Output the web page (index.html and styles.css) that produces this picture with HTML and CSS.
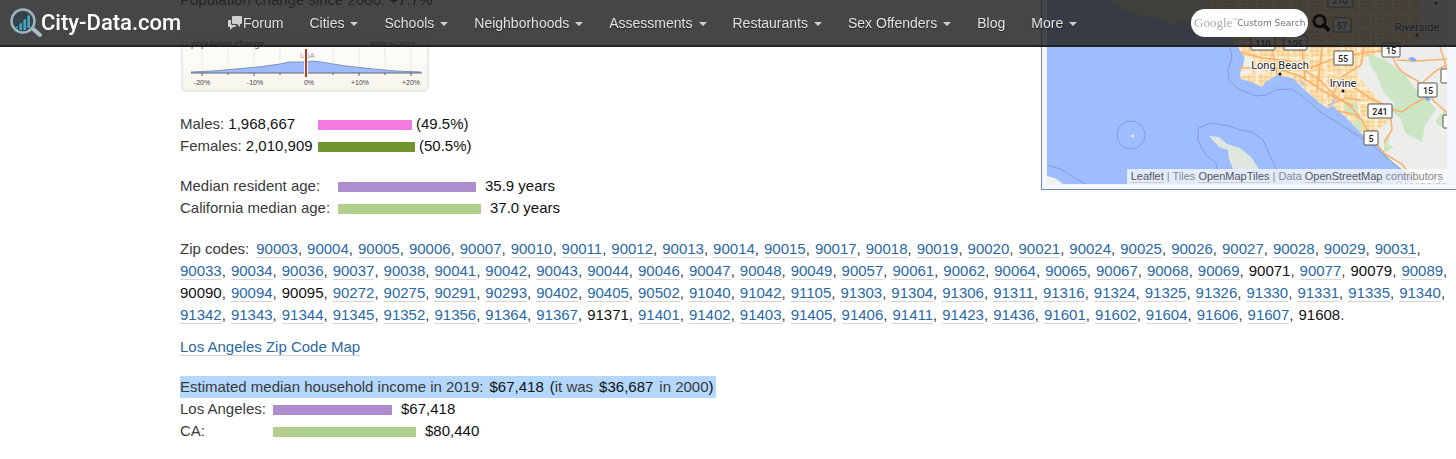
FILE: index.html
```html
<!DOCTYPE html>
<html lang="en">
<head>
<meta charset="utf-8">
<title>Los Angeles, California - City-Data.com</title>
<link rel="stylesheet" href="styles.css">
</head>
<body>
<header class="topbar">
  <a class="logo" href="#">
    <svg class="logo-mark" viewBox="0 0 32 30" aria-hidden="true">
      <path d="M22 20l8 7" stroke="#a9bcc2" stroke-width="4" stroke-linecap="round"/>
      <circle cx="13" cy="13" r="11.5" fill="#35444a" stroke="#9fb6be" stroke-width="2.5"/>
      <path d="M6 18h2v3h-2zM9 16h3v6h-3zM13 12h3v10h-3zM17 8h3v12h-3z" fill="#2b87a8"/>
      <path d="M11 15v7M15 11v11M19 7v13" stroke="#71bccc" stroke-width="1"/>
    </svg>
    <span>City-Data.com</span>
  </a>
  <nav class="menu">
    <a href="#"><svg class="chat" viewBox="0 0 16 14" aria-hidden="true"><path d="M6 0h8q1 0 1 1v6q0 1-1 1h-1v3l-3-3H6q-1 0-1-1V1q0-1 1-1zM4 4v4q0 1 1 1h4q0 2-1 2H6l-3 3v-3H2q-1 0-1-1V5q0-1 1-1z" fill="#d0d0d0"/></svg>Forum</a>
    <a class="drop" href="#">Cities</a>
    <a class="drop" href="#">Schools</a>
    <a class="drop" href="#">Neighborhoods</a>
    <a class="drop" href="#">Assessments</a>
    <a class="drop" href="#">Restaurants</a>
    <a class="drop" href="#">Sex Offenders</a>
    <a href="#">Blog</a>
    <a class="drop" href="#">More</a>
  </nav>
  <form class="search">
    <label class="pill"><span class="brand">Google<sup>™</sup></span><input type="text" placeholder="Custom Search" aria-label="Custom Search"></label>
    <button type="button" aria-label="Search"><svg viewBox="0 0 20 20" aria-hidden="true"><circle cx="8" cy="8" r="6" fill="none" stroke="#0c0c0c" stroke-width="3"/><path d="M12 12l6 6" stroke="#0c0c0c" stroke-width="4"/></svg></button>
  </form>
</header>

<main class="page">
  <div class="top">
    <div class="stats">
      <p class="line">Population change since 2000: <b>+7.7%</b></p>
      <svg class="chart" viewBox="0 0 248 60" role="img" aria-label="Population change, 2000 to 2010">
        <defs><linearGradient id="paper" x2="0" y2="1"><stop offset="0" stop-color="#fff"/><stop offset="1" stop-color="#f6f5ec"/></linearGradient></defs>
        <rect x="1" y="1" width="246" height="57" rx="4" fill="url(#paper)" stroke="#e9e9e5" stroke-width="2"/>
        <path d="M21 15v27M47 15v27M73 15v27M99 15v27M152 15v27M178 15v27M204 15v27M230 15v27" stroke="#ecebe2"/>
        <g class="caption"><text x="10" y="14">population change</text><text x="188" y="14">2005 to 2010</text></g>
        <text x="119" y="25" class="faint">USA</text>
        <path d="M10 39L32 38 55 36 77 34 99 31 109 29 125 29 131 28 140 29 152 31 165 33 192 36 215 38 240 39V40H10z" fill="#9dbafc"/>
        <path d="M10 39L32 38 55 36 77 34 99 31 109 29 125 29 131 28 140 29 152 31 165 33 192 36 215 38 240 39" fill="none" stroke="#7d93bd"/>
        <path d="M10 40H241M21 40v3M47 40v2M73 40v3M99 40v2M152 40v2M178 40v3M204 40v2M230 40v3" fill="none" stroke="#646464"/>
        <path d="M125 16v28" stroke="#fff" stroke-width="4"/><path d="M125 16v28" stroke="#b93b22" stroke-width="2"/>
        <g text-anchor="middle"><text x="21" y="52">-20%</text><text x="74" y="52">-10%</text><text x="128" y="52">0%</text><text x="179" y="52">+10%</text><text x="230" y="52">+20%</text></g>
      </svg>
      <div class="bars sex">
        <p><span>Males: <b>1,968,667</b></span><i class="bar pink" style="width:94px"></i><b>(49.5%)</b></p>
        <p><span>Females: <b>2,010,909</b></span><i class="bar leaf" style="width:97px"></i><b>(50.5%)</b></p>
      </div>
      <div class="bars age">
        <p><span>Median resident age:</span><i class="bar violet" style="width:138px"></i><b>35.9 years</b></p>
        <p><span>California median age:</span><i class="bar green" style="width:143px"></i><b>37.0 years</b></p>
      </div>
    </div>
    <aside class="map">
      <svg viewBox="1047 0 400 184" preserveAspectRatio="xMinYMin slice" role="img" aria-label="Map of the Los Angeles area">
        <defs>
          <pattern id="streets" width="17" height="15" patternUnits="userSpaceOnUse">
            <rect width="17" height="15" fill="#fbe6c0"/>
            <path d="M0 2h17M0 6h11M4 10h13M3 0v15M8 0v11M13 4v11" stroke="#f9c676" fill="none"/>
            <path d="M0 13h7M16 0v8" stroke="#fff7e6" stroke-width="1.5"/>
          </pattern>
        </defs>
        <rect x="1047" width="400" height="184" fill="#9ebdff"/>
        <path d="M1110 0L1130 13 1157 18 1170 24 1187 20 1215 22 1230 37 1238 47 1245 58 1243 66 1240 73 1241 79 1252 82 1262 87 1265 82 1277 75 1293 78 1303 88 1320 103 1328 108 1333 106 1347 118 1363 135 1378 145 1390 160 1407 173 1417 184H1447V0z" fill="#ededeb"/>
        <path d="M1110 0L1130 13 1157 18 1170 24 1187 20 1210 20V0z" fill="#cfe0b6"/>
        <path d="M1210 0V20L1230 37 1238 47 1245 58 1243 66 1240 73 1241 79 1252 82 1262 87 1265 82 1277 75 1293 78 1303 88 1320 103 1328 108 1333 106 1347 118 1363 135 1374 142 1377 130 1390 120 1386 108 1376 96 1364 84 1356 70 1366 58 1376 54 1400 48 1420 40V0z" fill="url(#streets)"/>
        <path d="M1368 54L1385 60 1403 72 1414 88 1425 97 1436 109 1425 125 1422 142 1405 133 1401 119 1390 110 1395 104 1384 93 1378 78 1370 64z" fill="#cce5c4"/>
        <path d="M1346 100l12 5 1 13-10-3-6-8zM1357 117l6 6-2 10-8-8zM1384 141l6-5-2 8 6 3-10 6zM1436 120l11-12v20l-10-3z" fill="#cfe5bd"/>
        <path d="M1245 55l9 5-3 14-9 2zM1255 65l8-2 2 8-9 3z" fill="#f1eee4"/>
        <g fill="none" stroke="#fcaf6c" stroke-width="1.5">
          <path d="M1240 52L1262 58 1290 61 1320 80 1333 94 1352 108 1362 120 1371 137 1385 154 1402 164 1417 184"/>
          <path d="M1272 47l5 28M1302 47l3 33M1322 47l-5 44M1310 68l30-12 40-5 15 0M1333 94l10-18 18-11 3-18M1350 85l20 13 20 10 2 22-8 12M1392 55c5 15 12 19 24 25l10 9 8 12 13 12M1397 60l20 1 30-2M1385 108l17 4 13-9 14-7M1440 47l7 22M1423 82l14-12 10-5"/>
          <path d="M1240 68h35l25 8 28 18 25 12M1328 105l18-7 15 2M1337 111l16 3 10 7"/>
        </g>
        <path d="M1274 81l6-3M1267 81l2 5M1270 80l5 1M1330 107l5-9M1301 81l3 4" stroke="#a7c4fb" stroke-width="2"/>
        <path d="M1408 58l5-1 4 3-5 2zM1424 97l4-1 3 4-4 1z" fill="#82acf4"/>
        <g fill="none" stroke="#8a9bcb">
          <path d="M1230 47l2 11-4 11 1 11 9 9 18 7 10-1 9-5 17-1 10 7 20 17 27 17 18 11 16 13 18 16 11 9"/>
          <circle cx="1131" cy="135" r="14"/>
          <path d="M1220 184l-4-21-10-8-8-14v-13l13-5 18 3 11 4 12 2 11 8 6 14 8 17 5 13M1047 165l14 4 12 8 13 7"/>
        </g>
        <path d="M1209 136l10 1 8 7 13 4 11 9 8 12-10 0h-16l-4-10-1-9-9-3z" fill="#dfe7df"/>
        <path d="M1047 176l8 2 8 6h-16z" fill="#f2f2ee"/><path d="M1131 135h3v2h-3z" fill="#e5ecf3"/>
        <g class="shield"><rect x="1328" y="-8" width="25" height="15" rx="1"/><rect x="1333" y="18" width="18" height="14" rx="1"/><rect x="1251" y="36" width="24" height="14" rx="1"/><rect x="1284" y="36" width="23" height="14" rx="1"/><rect x="1334" y="51" width="19" height="14" rx="1"/><rect x="1382" y="43" width="18" height="14" rx="1"/><rect x="1418" y="83" width="19" height="14" rx="1"/><rect x="1368" y="104" width="24" height="14" rx="1"/><rect x="1364" y="131" width="14" height="14" rx="1"/><rect x="1441" y="69" width="14" height="14" rx="1"/><rect x="1443" y="115" width="14" height="13" rx="1"/></g>
        <g class="num"><text x="1340" y="4">210</text><text x="1342" y="29">57</text><text x="1263" y="47">110</text><text x="1295" y="47">105</text><text x="1343" y="62">55</text><text x="1391" y="54">15</text><text x="1428" y="94">15</text><text x="1380" y="115">241</text><text x="1371" y="142">5</text></g>
        <g class="place"><text x="1280" y="69">Long Beach</text><text x="1343" y="87">Irvine</text><text x="1417" y="31">Riverside</text><text x="1421" y="189">Oceanside</text></g>
        <circle cx="1280" cy="74" r="1.5"/><circle cx="1343" cy="91" r="1.5"/><circle cx="1417" cy="35" r="1.5"/><circle cx="1436" cy="3" r="1.5"/>
      </svg>
      <div class="credit"><a href="#">Leaflet</a> | Tiles <a href="#">OpenMapTiles</a> | Data <a href="#">OpenStreetMap</a> contributors</div>
    </aside>
  </div>

  <ul class="zips" id="zips"><li class="zips-label">Zip codes:</li></ul>
  <p class="line ziplink"><a class="link" href="#">Los Angeles Zip Code Map</a></p>

  <section class="income">
    <p class="selected"><span>Estimated median household income in 2019:</span> <b>$67,418</b> <span><b>(</b>it was</span> <b>$36,687</b> <span>in 2000<b>)</b></span></p>
    <div class="bars money">
      <p><span>Los Angeles:</span><i class="bar violet" style="width:119px"></i><b>$67,418</b></p>
      <p><span>CA:</span><i class="bar green" style="width:143px"></i><b>$80,440</b></p>
    </div>
  </section>
</main>
<script src="zips.js"></script>
</body>
</html>
```

FILE: styles.css
```css
* { box-sizing: border-box; }
body { margin: 0; background: #fff; color: #3a3a3a; font: 15px/22px "Liberation Sans", Arial, sans-serif; overflow: hidden; }
p, ul { margin: 0; padding: 0; list-style: none; }
b { font-weight: normal; color: #111; }
a { text-decoration: none; }

.topbar { position: fixed; z-index: 5; top: 0; left: 0; right: 0; height: 47px; display: flex; align-items: center; padding: 0 125px 0 10px; background: rgba(33, 33, 33, .83); border-bottom: 2px solid #222; }
.logo { display: flex; align-items: center; width: 217px; color: #fff; font: 500 22px/30px Roboto, sans-serif; }
.logo-mark { width: 32px; height: 30px; margin-right: -1px; fill: none; }
.menu { display: flex; gap: 26px; font-size: 14px; line-height: 20px; }
.menu a { display: flex; align-items: center; color: #e2e2e2; text-shadow: 0 1px 1px #222; white-space: nowrap; }
.chat { width: 16px; height: 14px; }
.drop::after { content: ""; margin: 2px 0 0 6px; border: 4px solid transparent; border-top-color: #d0d0d0; border-bottom: 0; }
.search { display: flex; align-items: center; gap: 4px; margin-left: auto; }
.pill { display: flex; align-items: center; width: 117px; height: 28px; padding: 0 2px 0 3px; border-radius: 14px; background: #fff; color: #aaa; }
.brand { font: 13px/20px "Liberation Serif", serif; }
.brand sup { font-size: 5px; line-height: 0; vertical-align: 6px; }
.pill input { flex: 1; min-width: 0; padding: 0; border: 0; outline: 0; background: transparent; font: 9px/20px "DejaVu Sans", sans-serif; }
.pill input::placeholder { color: #777; opacity: 1; }
.search button { width: 19px; height: 20px; padding: 0; border: 0; background: none; }
.search button svg { display: block; width: 19px; height: 20px; }

.page { margin-top: -11px; padding: 0 8px 16px 180px; }
.top { display: flex; justify-content: space-between; margin-right: -8px; }
.line { height: 22px; }
.chart { display: block; width: 248px; margin: 22px 0 20px 1px; font: 7px "Liberation Sans", sans-serif; fill: #444; }
.chart .caption { font-size: 9px; }
.chart .caption text:last-child { font-size: 8px; }
.chart .faint { fill: #999; }

.bars p { display: flex; align-items: center; }
.bar { height: 10px; margin-top: 2px; }
.sex span { width: 138px; }
.sex p > b { margin-left: 4px; }
.age { margin-top: 18px; }
.age span { width: 158px; }
.money span { width: 93px; }
.age p > b, .money p > b { margin-left: 9px; }
.pink { background: #f27ae0; }
.leaf { background: #6f962e; }
.violet { background: #ad8dcd; }
.green { background: #b0cf8c; }

.map { position: relative; width: 415px; height: 201px; padding: 0 9px 5px 5px; border: 1px solid #6f89ab; border-width: 0 0 1px 1px; background: #f3f6fc; }
.map svg { display: block; width: 100%; height: 184px; margin-top: 11px; }
.shield rect { fill: #fff; stroke: #555; }
.num, .place { text-anchor: middle; font-family: Roboto, sans-serif; fill: #222; }
.num { font-size: 9px; font-weight: 500; }
.place { font-size: 11px; paint-order: stroke; stroke: #fff; stroke-width: 2px; }
.credit { position: absolute; right: 9px; bottom: 5px; padding: 0 4px; background: rgba(255, 255, 255, .7); color: #888; font-size: 11px; line-height: 15px; white-space: nowrap; }
.credit a { color: #555; border-bottom: 1px solid #ccc; }

.zips { display: flex; flex-wrap: wrap; column-gap: 5px; margin-top: 19px; color: #3a3a3a; }
.zips li { height: 22px; }
.zips .zips-label { margin-right: 2px; }
.link { color: #2a68a5; border-bottom: 1px solid #d9d4d4; }
.ziplink { margin-top: 10px; }
.income { margin-top: 18px; }
.selected { display: flex; gap: 6px; width: max-content; padding-right: 2px; background: #b3d7fd; }
```

FILE: zips.js
```js
// A leading "*" marks a code that has no page of its own.
const codes = `90003 90004 90005 90006 90007 90010 90011 90012 90013 90014 90015 90017 90018 90019 90020 90021 90024 90025 90026 90027 90028 90029 90031
90033 90034 90036 90037 90038 90041 90042 90043 90044 90046 90047 90048 90049 90057 90061 90062 90064 90065 90067 90068 90069 *90071 90077 *90079 90089
*90090 90094 *90095 90272 90275 90291 90293 90402 90405 90502 91040 91042 91105 91303 91304 91306 91311 91316 91324 91325 91326 91330 91331 91335 91340
91342 91343 91344 91345 91352 91356 91364 91367 *91371 91401 91402 91403 91405 91406 91411 91423 91436 91601 91602 91604 91606 91607 *91608`.split(/\s+/);

const list = document.getElementById("zips");
codes.forEach((code, i) => {
  const item = document.createElement("li");
  const plain = code.startsWith("*");
  const tag = document.createElement(plain ? "b" : "a");
  tag.textContent = code.replace("*", "");
  if (!plain) {
    tag.href = "#";
    tag.className = "link";
  }
  item.append(tag, i === codes.length - 1 ? "." : ",");
  list.append(item);
});
```
